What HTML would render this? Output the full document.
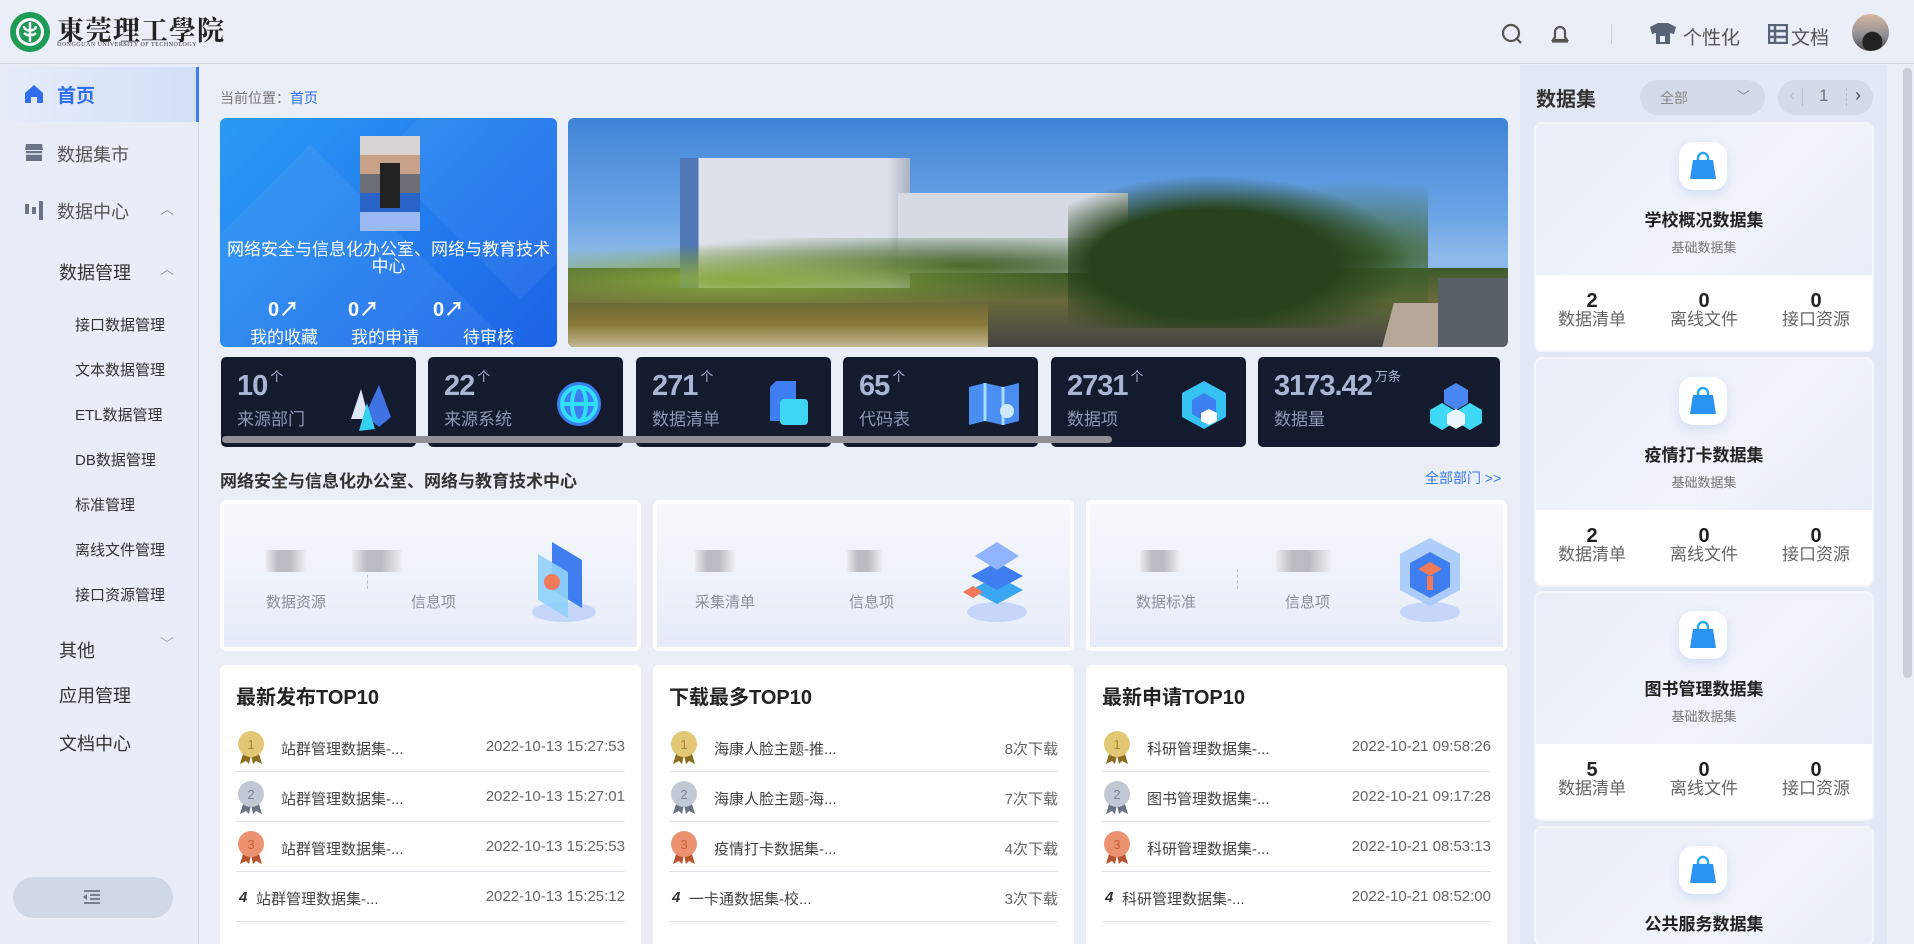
<!DOCTYPE html>
<html style="width:1914px;height:944px;overflow:hidden"><head><meta charset="utf-8">
<style>
*{margin:0;padding:0;box-sizing:border-box}
html,body{width:1914px;height:944px;overflow:hidden}
body{background:#e9eef7;font-family:"Liberation Sans","Noto Sans CJK SC",sans-serif;color:#333}
#wrap{position:relative;width:1914px;height:944px;overflow:hidden}
.abs{position:absolute}
.hdr{left:0;top:0;width:1914px;height:64px;background:#e9eef7;border-bottom:1px solid #cfd6e2}
.side{left:0;top:64px;width:199px;height:880px;border-right:1px solid #d3d9e4;background:#e8edf7}
.mi{position:absolute;font-size:18px;color:#555}
.sub{position:absolute;left:75px;font-size:15px;color:#333}
.card{position:absolute;border-radius:6px}
.stat{position:absolute;top:357px;width:195px;height:90px;background:#141b2f;border-radius:5px}
.stat .n{position:absolute;left:16px;top:9px;font-size:29px;font-weight:bold;color:#aab5d3;letter-spacing:-1px}
.stat .n sup{font-size:13px;font-weight:normal;vertical-align:14px;margin-left:3px;letter-spacing:0}
.stat .l{position:absolute;left:16px;top:48px;font-size:17px;color:#8d97b3}
.dept{position:absolute;top:500px;width:421px;height:151px;background:#fff;border-radius:6px;padding:4px}
.dept .in{position:absolute;left:4px;top:4px;right:4px;bottom:4px;background:linear-gradient(180deg,#f6f8fc 0%,#e6ecf8 100%)}
.blk{position:absolute;height:22px;background:linear-gradient(90deg,#ececf0,#b9bcc2 30%,#b9bcc2 60%,#eef0f4)}
.dl{position:absolute;top:87px;font-size:15px;color:#8b8f99}
.top{position:absolute;top:665px;width:421px;height:290px;background:#fff;border-radius:6px}
.top h3{position:absolute;left:16px;top:16px;font-size:20px;color:#222}
.row{position:absolute;left:16px;right:16px;height:50px;border-bottom:1px solid #dfe2e8;font-size:15px}
.row .t{position:absolute;left:45px;top:16px;color:#444}
.row .d{position:absolute;right:0;top:16px;color:#666}
.medal{position:absolute;left:0;top:8px;width:30px;height:34px}
.ds{position:absolute;left:1536px;width:336px;height:226px;border-radius:6px;background:#fff;overflow:hidden;box-shadow:0 0 0 2px #f4f6fb}
.ds .tp{position:absolute;left:0;top:0;width:336px;height:151px;background:linear-gradient(135deg,#eaeff9,#f0f3fa 60%,#e8edf7)}
.ds .ic{position:absolute;left:143px;top:18px;width:48px;height:48px;background:#fff;border-radius:14px;box-shadow:0 4px 10px rgba(100,140,220,.2)}
.ds .nm{position:absolute;left:0;width:336px;top:82px;text-align:center;font-size:17px;font-weight:bold;color:#222}
.ds .sb{position:absolute;left:0;width:336px;top:113px;text-align:center;font-size:13px;color:#777}
.ds .c{position:absolute;top:168px;width:112px;text-align:center}
.ds .c b{display:block;font-size:20px;line-height:18px;color:#222;font-weight:bold}
.ds .c span{display:block;font-size:17px;color:#666;line-height:20px}
</style></head><body><div id="wrap">

<div class="abs hdr">
  <svg class="abs" style="left:9px;top:11px" width="42" height="42" viewBox="0 0 42 42"><circle cx="21" cy="21" r="20" fill="#1e9b55"/><circle cx="21" cy="21" r="14" fill="#fff"/><circle cx="21" cy="21" r="11" fill="#1e9b55"/><path d="M21 11v20M15 15c0 6 12 6 12 0M15 22c3 3 9 3 12 0" stroke="#fff" stroke-width="2.4" fill="none"/></svg>
  <div class="abs" style="left:57px;top:9px;font-family:'Noto Serif CJK SC',serif;font-size:27px;font-weight:bold;color:#222;letter-spacing:1px">東莞理工學院</div>
  <div class="abs" style="left:57px;top:42px;font-size:6px;color:#333;letter-spacing:.5px;font-family:'Liberation Serif',serif">DONGGUAN UNIVERSITY OF TECHNOLOGY</div>
  <svg class="abs" style="left:1500px;top:22px" width="24" height="24" viewBox="0 0 24 24"><circle cx="11" cy="11" r="8" stroke="#555" stroke-width="2.2" fill="none"/><path d="M17 17l4 4" stroke="#555" stroke-width="2.2"/></svg>
  <svg class="abs" style="left:1548px;top:22px" width="24" height="24" viewBox="0 0 24 24"><path d="M5 18h14l-2-3v-5a5 5 0 0 0-10 0v5z" stroke="#555" stroke-width="2.2" fill="none"/><path d="M4 19.5h16" stroke="#555" stroke-width="2.2"/></svg>
  <div class="abs" style="left:1611px;top:24px;width:1px;height:20px;background:#c9ced8"></div>
  <svg class="abs" style="left:1649px;top:23px" width="28" height="22" viewBox="0 0 28 22"><path d="M1 4l8-4h10l8 4-2 7-4-1v11H7V10l-4 1z" fill="#5a6478"/><rect x="11" y="13" width="5" height="6" fill="#e9eef7"/></svg>
  <div class="abs" style="left:1683px;top:23px;font-size:19px;color:#555">个性化</div>
  <svg class="abs" style="left:1768px;top:24px" width="20" height="20" viewBox="0 0 20 20"><rect x="1" y="1" width="18" height="18" fill="none" stroke="#5a6478" stroke-width="2.4"/><path d="M1 7h18M1 13h18M7 1v18" stroke="#5a6478" stroke-width="2.4"/></svg>
  <div class="abs" style="left:1791px;top:23px;font-size:19px;color:#555">文档</div>
  <div class="abs" style="left:1852px;top:14px;width:37px;height:37px;border-radius:50%;background:radial-gradient(circle at 55% 75%,#222 0 28%,transparent 30%),linear-gradient(180deg,#d9b9a0,#8b8c92 60%,#444)"></div>
</div>

<div class="abs side">
  <div class="abs" style="left:8px;top:3px;width:191px;height:55px;background:linear-gradient(90deg,#e6ecf9,#d3dff8);border-right:3px solid #3d7bf0"></div>
  <svg class="abs" style="left:24px;top:20px" width="20" height="20" viewBox="0 0 20 20"><path d="M10 1L1 9v10h6v-6h6v6h6V9z" fill="#2f6fed"/></svg>
  <div class="mi" style="left:57px;top:17px;color:#2f6fed;font-weight:bold;font-size:19px">首页</div>
  <svg class="abs" style="left:24px;top:78px" width="20" height="20" viewBox="0 0 20 20"><path d="M2 2h16l1 6H1z" fill="#6b7386"/><rect x="2" y="9" width="16" height="10" fill="#6b7386"/><path d="M2 12h16" stroke="#e8edf7" stroke-width="1.5"/></svg>
  <div class="mi" style="left:57px;top:77px">数据集市</div>
  <svg class="abs" style="left:24px;top:135px" width="22" height="22" viewBox="0 0 22 22"><rect x="1" y="5" width="4" height="10" fill="#6b7386"/><rect x="8" y="8" width="4" height="7" fill="#6b7386"/><rect x="15" y="2" width="4" height="19" fill="#6b7386"/></svg>
  <div class="mi" style="left:57px;top:134px">数据中心</div>
  <div class="abs" style="left:160px;top:135px;color:#999;font-size:14px">︿</div>
  <div class="mi" style="left:59px;top:195px;color:#333">数据管理</div>
  <div class="abs" style="left:160px;top:195px;color:#999;font-size:14px">︿</div>
  <div class="sub" style="top:250px">接口数据管理</div>
  <div class="sub" style="top:295px">文本数据管理</div>
  <div class="sub" style="top:340px">ETL数据管理</div>
  <div class="sub" style="top:385px">DB数据管理</div>
  <div class="sub" style="top:430px">标准管理</div>
  <div class="sub" style="top:475px">离线文件管理</div>
  <div class="sub" style="top:520px">接口资源管理</div>
  <div class="mi" style="left:59px;top:573px;color:#333">其他</div>
  <div class="abs" style="left:160px;top:570px;color:#aaa;font-size:14px">﹀</div>
  <div class="mi" style="left:59px;top:618px;color:#333">应用管理</div>
  <div class="mi" style="left:59px;top:666px;color:#333">文档中心</div>
  <div class="abs" style="left:13px;top:813px;width:160px;height:41px;border-radius:21px;background:#d0d8e6"></div>
  <svg class="abs" style="left:82px;top:825px" width="20" height="16" viewBox="0 0 20 16"><path d="M2 2h16M8 6h10M8 10h10M2 14h16" stroke="#6b7386" stroke-width="1.8"/><path d="M1 8l4-3v6z" fill="#6b7386"/></svg>
</div>

<div class="abs" style="left:220px;top:88px;font-size:14px;color:#777">当前位置：<span style="color:#2f6fed">首页</span></div>

<div class="card" style="left:220px;top:118px;width:337px;height:229px;overflow:hidden;background:linear-gradient(135deg,#2a9af6 0%,#2481ef 45%,#1c63e6 100%)">
  <div class="abs" style="left:-40px;top:80px;width:260px;height:260px;background:rgba(255,255,255,.06);transform:rotate(45deg)"></div>
  <div class="abs" style="left:200px;top:-60px;width:200px;height:200px;background:rgba(255,255,255,.05);transform:rotate(45deg)"></div>
  <div class="abs" style="left:140px;top:18px;width:60px;height:95px;background:linear-gradient(180deg,#d8d4d2 0 20%,#c9a088 20% 40%,#6c6e76 40% 60%,#2a63c8 60% 80%,#9bb9f2 80%)"></div>
  <div class="abs" style="left:160px;top:45px;width:20px;height:45px;background:#222"></div>
  <div class="abs" style="left:0;top:123px;width:337px;text-align:center;font-size:17px;color:#fff;line-height:17px">网络安全与信息化办公室、网络与教育技术<br>中心</div>
  <div class="abs" style="left:48px;top:175px;font-size:20px;font-weight:bold;color:#fff">0↗</div>
  <div class="abs" style="left:128px;top:175px;font-size:20px;font-weight:bold;color:#fff">0↗</div>
  <div class="abs" style="left:213px;top:175px;font-size:20px;font-weight:bold;color:#fff">0↗</div>
  <div class="abs" style="left:30px;top:205px;font-size:17px;color:#fff">我的收藏</div>
  <div class="abs" style="left:131px;top:205px;font-size:17px;color:#fff">我的申请</div>
  <div class="abs" style="left:243px;top:205px;font-size:17px;color:#fff">待审核</div>
</div>

<div class="card" style="left:568px;top:118px;width:940px;height:229px;overflow:hidden;background:linear-gradient(180deg,#3f85d6 0%,#6ea6e6 45%,#8db9ea 60%)">
  <div class="abs" style="left:0;top:150px;width:940px;height:79px;background:linear-gradient(180deg,#3d5a2c,#6a6a3a 40%,#444 100%)"></div>
  <div class="abs" style="left:112px;top:40px;width:230px;height:130px;background:linear-gradient(90deg,#4f78b4 0 8%,#dde2ea 8% 90%,#aab3c0)"></div>
  <div class="abs" style="left:330px;top:75px;width:230px;height:80px;background:#d6dbe3"></div>
  <div class="abs" style="left:0;top:120px;width:560px;height:70px;background:radial-gradient(ellipse at 30% 60%,#8aa83f,transparent 60%),radial-gradient(ellipse at 70% 40%,#3a5a24,transparent 60%)"></div>
  <div class="abs" style="left:500px;top:50px;width:360px;height:160px;background:radial-gradient(ellipse at 40% 60%,#27421c 0 40%,transparent 65%),radial-gradient(ellipse at 80% 55%,#3b6028,transparent 60%)"></div>
  <div class="abs" style="left:0;top:185px;width:420px;height:44px;background:linear-gradient(180deg,#6c6a36,#8a7a3a 50%,#c2b890)"></div>
  <div class="abs" style="left:820px;top:185px;width:60px;height:44px;background:#b5a899;transform:skewX(-15deg)"></div>
  <div class="abs" style="left:870px;top:160px;width:70px;height:69px;background:#5a6068"></div>
</div>

<div class="stat" style="left:221px"><div class="n">10<sup>个</sup></div><div class="l">来源部门</div>
<svg class="abs" style="left:120px;top:22px" width="56" height="56" viewBox="0 0 56 56"><path d="M10 40L20 10 28 40z" fill="#dfe6f6"/><path d="M24 36L38 6 50 38 38 48z" fill="#3f72e2"/><path d="M18 52L26 24 34 50z" fill="#35d0ee"/></svg></div>
<div class="stat" style="left:428px"><div class="n">22<sup>个</sup></div><div class="l">来源系统</div>
<svg class="abs" style="left:126px;top:22px" width="50" height="50" viewBox="0 0 50 50"><circle cx="25" cy="25" r="22" fill="#3b7ff0"/><circle cx="25" cy="25" r="17" fill="none" stroke="#2ee0f6" stroke-width="4"/><ellipse cx="25" cy="25" rx="7" ry="17" fill="none" stroke="#2ee0f6" stroke-width="4"/><path d="M8 25h34" stroke="#2ee0f6" stroke-width="4"/></svg></div>
<div class="stat" style="left:636px"><div class="n">271<sup>个</sup></div><div class="l">数据清单</div>
<svg class="abs" style="left:130px;top:22px" width="46" height="50" viewBox="0 0 46 50"><path d="M4 8l6-6h20v40H4z" fill="#3f7ef0"/><rect x="14" y="20" width="28" height="26" rx="4" fill="#3fd6f4"/></svg></div>
<div class="stat" style="left:843px"><div class="n">65<sup>个</sup></div><div class="l">代码表</div>
<svg class="abs" style="left:124px;top:24px" width="54" height="46" viewBox="0 0 54 46"><path d="M2 6l16-4 18 4 16-4v38l-16 4-18-4-16 4z" fill="#4b8ef2"/><path d="M18 2v38M36 6v38" stroke="#a8dcfa" stroke-width="3"/><circle cx="40" cy="30" r="7" fill="#cfeaff"/></svg></div>
<div class="stat" style="left:1051px"><div class="n">2731<sup>个</sup></div><div class="l">数据项</div>
<svg class="abs" style="left:128px;top:22px" width="50" height="52" viewBox="0 0 50 52"><path d="M25 2l22 12v24L25 50 3 38V14z" fill="#36c2f3"/><path d="M25 14l12 7v14l-12 7-12-7V21z" fill="#3b7ff0"/><path d="M30 30l8 4v8l-8 4-8-4v-8z" fill="#fff"/></svg></div>
<div class="stat" style="left:1258px;width:242px"><div class="n">3173.42<sup>万条</sup></div><div class="l">数据量</div>
<svg class="abs" style="left:170px;top:24px" width="56" height="52" viewBox="0 0 56 52"><path d="M28 2l12 7v13l-12 7-12-7V9z" fill="#4a86f2"/><path d="M14 22l12 7v13l-12 7-12-7V29z" fill="#3fd8f4"/><path d="M42 22l12 7v13l-12 7-12-7V29z" fill="#3fd8f4"/><path d="M28 28l9 5v10l-9 5-9-5V33z" fill="#eef4ff"/></svg></div>
<div class="abs" style="left:222px;top:436px;width:890px;height:7px;border-radius:4px;background:#8f9197"></div>

<div class="abs" style="left:220px;top:467px;font-size:17px;font-weight:bold;color:#333">网络安全与信息化办公室、网络与教育技术中心</div>
<div class="abs" style="left:1425px;top:468px;font-size:14px;color:#3d7bf0">全部部门 &gt;&gt;</div>

<div class="dept" style="left:220px"><div class="in">
  <div class="blk" style="left:42px;top:46px;width:40px"></div><div class="blk" style="left:128px;top:46px;width:50px"></div>
  <div class="dl" style="left:42px">数据资源</div><div class="dl" style="left:187px">信息项</div>
  <div class="abs" style="left:143px;top:65px;height:20px;border-left:1px dashed #bbb"></div>
  <svg class="abs" style="left:300px;top:30px" width="80" height="90" viewBox="0 0 80 90"><ellipse cx="40" cy="78" rx="32" ry="10" fill="#c6d6fa"/><path d="M28 8l30 18v48L28 56z" fill="#3f7ef0"/><path d="M14 20l30 18v46L14 66z" fill="#8fd1fb" opacity=".9"/><circle cx="28" cy="48" r="8" fill="#f07a5a"/></svg>
</div></div>
<div class="dept" style="left:653px"><div class="in">
  <div class="blk" style="left:38px;top:46px;width:40px"></div><div class="blk" style="left:190px;top:46px;width:35px"></div>
  <div class="dl" style="left:38px">采集清单</div><div class="dl" style="left:192px">信息项</div>
  <svg class="abs" style="left:300px;top:30px" width="80" height="90" viewBox="0 0 80 90"><ellipse cx="40" cy="78" rx="30" ry="10" fill="#c6d6fa"/><path d="M40 42l26 14-26 14-26-14z" fill="#3aa6f2"/><path d="M40 28l26 14-26 14-26-14z" fill="#3f7ef0"/><path d="M40 8l22 14-22 14-22-14z" fill="#8fb4fb"/><path d="M16 52l10 6-10 6-10-6z" fill="#f07a5a"/></svg>
</div></div>
<div class="dept" style="left:1086px"><div class="in">
  <div class="blk" style="left:50px;top:46px;width:40px"></div><div class="blk" style="left:186px;top:46px;width:55px"></div>
  <div class="dl" style="left:46px">数据标准</div><div class="dl" style="left:195px">信息项</div>
  <div class="abs" style="left:147px;top:65px;height:20px;border-left:1px dashed #bbb"></div>
  <svg class="abs" style="left:300px;top:30px" width="80" height="90" viewBox="0 0 80 90"><ellipse cx="40" cy="78" rx="30" ry="10" fill="#c6d6fa"/><path d="M40 4l30 16v36L40 72 10 56V20z" fill="#9cc4fb" opacity=".8"/><path d="M40 18l20 11v24L40 64 20 53V29z" fill="#3f7ef0"/><path d="M40 28l12 7-12 7-12-7z" fill="#f07a5a"/><path d="M40 42v14" stroke="#f07a5a" stroke-width="6"/></svg>
</div></div>

<div class="top" style="left:220px"><h3>最新发布TOP10</h3>
  <div class="row" style="top:57px"><svg class="medal" viewBox="0 0 30 34"><path d="M7 24l-3 10 6-3 3 3 2-9z M23 24l3 10-6-3-3 3-2-9z" fill="#8a6d1e"/><circle cx="15" cy="14" r="13" fill="#e2c775"/><text x="15" y="19" font-size="13" text-anchor="middle" fill="#a78832">1</text></svg><span class="t">站群管理数据集-...</span><span class="d">2022-10-13 15:27:53</span></div>
  <div class="row" style="top:107px"><svg class="medal" viewBox="0 0 30 34"><path d="M7 24l-3 10 6-3 3 3 2-9z M23 24l3 10-6-3-3 3-2-9z" fill="#6b7486"/><circle cx="15" cy="14" r="13" fill="#c3c9d4"/><text x="15" y="19" font-size="13" text-anchor="middle" fill="#7a8394">2</text></svg><span class="t">站群管理数据集-...</span><span class="d">2022-10-13 15:27:01</span></div>
  <div class="row" style="top:157px"><svg class="medal" viewBox="0 0 30 34"><path d="M7 24l-3 10 6-3 3 3 2-9z M23 24l3 10-6-3-3 3-2-9z" fill="#b8532f"/><circle cx="15" cy="14" r="13" fill="#ec9270"/><text x="15" y="19" font-size="13" text-anchor="middle" fill="#c2603a">3</text></svg><span class="t">站群管理数据集-...</span><span class="d">2022-10-13 15:25:53</span></div>
  <div class="row" style="top:207px"><span class="abs" style="left:3px;top:17px;font-weight:bold;font-style:italic">4</span><span class="t" style="left:20px">站群管理数据集-...</span><span class="d">2022-10-13 15:25:12</span></div>
</div>
<div class="top" style="left:653px"><h3>下载最多TOP10</h3>
  <div class="row" style="top:57px"><svg class="medal" viewBox="0 0 30 34"><path d="M7 24l-3 10 6-3 3 3 2-9z M23 24l3 10-6-3-3 3-2-9z" fill="#8a6d1e"/><circle cx="15" cy="14" r="13" fill="#e2c775"/><text x="15" y="19" font-size="13" text-anchor="middle" fill="#a78832">1</text></svg><span class="t">海康人脸主题-推...</span><span class="d">8次下载</span></div>
  <div class="row" style="top:107px"><svg class="medal" viewBox="0 0 30 34"><path d="M7 24l-3 10 6-3 3 3 2-9z M23 24l3 10-6-3-3 3-2-9z" fill="#6b7486"/><circle cx="15" cy="14" r="13" fill="#c3c9d4"/><text x="15" y="19" font-size="13" text-anchor="middle" fill="#7a8394">2</text></svg><span class="t">海康人脸主题-海...</span><span class="d">7次下载</span></div>
  <div class="row" style="top:157px"><svg class="medal" viewBox="0 0 30 34"><path d="M7 24l-3 10 6-3 3 3 2-9z M23 24l3 10-6-3-3 3-2-9z" fill="#b8532f"/><circle cx="15" cy="14" r="13" fill="#ec9270"/><text x="15" y="19" font-size="13" text-anchor="middle" fill="#c2603a">3</text></svg><span class="t">疫情打卡数据集-...</span><span class="d">4次下载</span></div>
  <div class="row" style="top:207px"><span class="abs" style="left:3px;top:17px;font-weight:bold;font-style:italic">4</span><span class="t" style="left:20px">一卡通数据集-校...</span><span class="d">3次下载</span></div>
</div>
<div class="top" style="left:1086px"><h3>最新申请TOP10</h3>
  <div class="row" style="top:57px"><svg class="medal" viewBox="0 0 30 34"><path d="M7 24l-3 10 6-3 3 3 2-9z M23 24l3 10-6-3-3 3-2-9z" fill="#8a6d1e"/><circle cx="15" cy="14" r="13" fill="#e2c775"/><text x="15" y="19" font-size="13" text-anchor="middle" fill="#a78832">1</text></svg><span class="t">科研管理数据集-...</span><span class="d">2022-10-21 09:58:26</span></div>
  <div class="row" style="top:107px"><svg class="medal" viewBox="0 0 30 34"><path d="M7 24l-3 10 6-3 3 3 2-9z M23 24l3 10-6-3-3 3-2-9z" fill="#6b7486"/><circle cx="15" cy="14" r="13" fill="#c3c9d4"/><text x="15" y="19" font-size="13" text-anchor="middle" fill="#7a8394">2</text></svg><span class="t">图书管理数据集-...</span><span class="d">2022-10-21 09:17:28</span></div>
  <div class="row" style="top:157px"><svg class="medal" viewBox="0 0 30 34"><path d="M7 24l-3 10 6-3 3 3 2-9z M23 24l3 10-6-3-3 3-2-9z" fill="#b8532f"/><circle cx="15" cy="14" r="13" fill="#ec9270"/><text x="15" y="19" font-size="13" text-anchor="middle" fill="#c2603a">3</text></svg><span class="t">科研管理数据集-...</span><span class="d">2022-10-21 08:53:13</span></div>
  <div class="row" style="top:207px"><span class="abs" style="left:3px;top:17px;font-weight:bold;font-style:italic">4</span><span class="t" style="left:20px">科研管理数据集-...</span><span class="d">2022-10-21 08:52:00</span></div>
</div>

<div class="abs" style="left:1520px;top:65px;width:367px;height:879px;background:#e3e9f4"></div>
<div class="abs" style="left:1536px;top:83px;font-size:20px;font-weight:bold;color:#333">数据集</div>
<div class="abs" style="left:1640px;top:80px;width:125px;height:35px;border-radius:18px;background:#d3dbe8"></div>
<div class="abs" style="left:1660px;top:88px;font-size:14px;color:#888">全部</div>
<div class="abs" style="left:1737px;top:86px;font-size:13px;color:#888">﹀</div>
<div class="abs" style="left:1778px;top:80px;width:95px;height:35px;border-radius:18px;background:#d3dbe8"></div>
<div class="abs" style="left:1789px;top:87px;font-size:16px;color:#bbb">‹</div>
<div class="abs" style="left:1802px;top:88px;height:18px;border-left:1px solid #bbb"></div>
<div class="abs" style="left:1819px;top:86px;font-size:17px;color:#777">1</div>
<div class="abs" style="left:1846px;top:88px;height:18px;border-left:1px dashed #bbb"></div>
<div class="abs" style="left:1855px;top:85px;font-size:18px;color:#555">›</div>

<div class="ds" style="top:124px"><div class="tp"></div><div class="ic"><svg style="margin:9px" width="30" height="30" viewBox="0 0 30 30"><path d="M10 9V7a5 5 0 0 1 10 0v2" stroke="#2aa8f5" stroke-width="2.5" fill="none"/><path d="M5 9h20l3 19H2z" fill="#2b93f2"/></svg></div><div class="nm">学校概况数据集</div><div class="sb">基础数据集</div>
<div class="c" style="left:0"><b>2</b><span>数据清单</span></div><div class="c" style="left:112px"><b>0</b><span>离线文件</span></div><div class="c" style="left:224px"><b>0</b><span>接口资源</span></div></div>
<div class="ds" style="top:359px"><div class="tp"></div><div class="ic"><svg style="margin:9px" width="30" height="30" viewBox="0 0 30 30"><path d="M10 9V7a5 5 0 0 1 10 0v2" stroke="#2aa8f5" stroke-width="2.5" fill="none"/><path d="M5 9h20l3 19H2z" fill="#2b93f2"/></svg></div><div class="nm">疫情打卡数据集</div><div class="sb">基础数据集</div>
<div class="c" style="left:0"><b>2</b><span>数据清单</span></div><div class="c" style="left:112px"><b>0</b><span>离线文件</span></div><div class="c" style="left:224px"><b>0</b><span>接口资源</span></div></div>
<div class="ds" style="top:593px"><div class="tp"></div><div class="ic"><svg style="margin:9px" width="30" height="30" viewBox="0 0 30 30"><path d="M10 9V7a5 5 0 0 1 10 0v2" stroke="#2aa8f5" stroke-width="2.5" fill="none"/><path d="M5 9h20l3 19H2z" fill="#2b93f2"/></svg></div><div class="nm">图书管理数据集</div><div class="sb">基础数据集</div>
<div class="c" style="left:0"><b>5</b><span>数据清单</span></div><div class="c" style="left:112px"><b>0</b><span>离线文件</span></div><div class="c" style="left:224px"><b>0</b><span>接口资源</span></div></div>
<div class="ds" style="top:828px;height:116px"><div class="tp"></div><div class="ic"><svg style="margin:9px" width="30" height="30" viewBox="0 0 30 30"><path d="M10 9V7a5 5 0 0 1 10 0v2" stroke="#2aa8f5" stroke-width="2.5" fill="none"/><path d="M5 9h20l3 19H2z" fill="#2b93f2"/></svg></div><div class="nm">公共服务数据集</div></div>

<div class="abs" style="left:1903px;top:68px;width:9px;height:610px;border-radius:5px;background:#c9ced8"></div>
</div></body></html>
